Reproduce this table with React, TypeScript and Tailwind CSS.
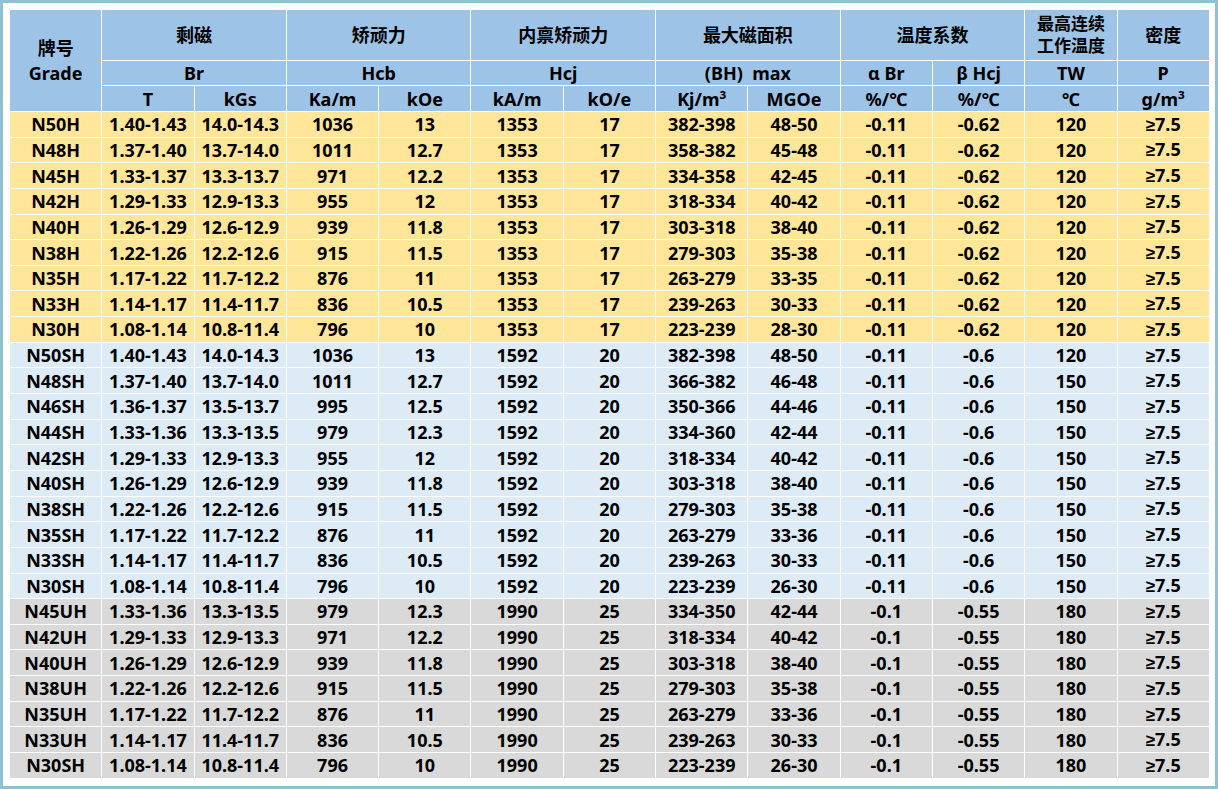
import React from 'react';

type Row = string[];

const hRows: Row[] = [
  ['N50H', '1.40-1.43', '14.0-14.3', '1036', '13', '382-398', '48-50'],
  ['N48H', '1.37-1.40', '13.7-14.0', '1011', '12.7', '358-382', '45-48'],
  ['N45H', '1.33-1.37', '13.3-13.7', '971', '12.2', '334-358', '42-45'],
  ['N42H', '1.29-1.33', '12.9-13.3', '955', '12', '318-334', '40-42'],
  ['N40H', '1.26-1.29', '12.6-12.9', '939', '11.8', '303-318', '38-40'],
  ['N38H', '1.22-1.26', '12.2-12.6', '915', '11.5', '279-303', '35-38'],
  ['N35H', '1.17-1.22', '11.7-12.2', '876', '11', '263-279', '33-35'],
  ['N33H', '1.14-1.17', '11.4-11.7', '836', '10.5', '239-263', '30-33'],
  ['N30H', '1.08-1.14', '10.8-11.4', '796', '10', '223-239', '28-30'],
];

const shRows: Row[] = [
  ['N50SH', '1.40-1.43', '14.0-14.3', '1036', '13', '382-398', '48-50', '120'],
  ['N48SH', '1.37-1.40', '13.7-14.0', '1011', '12.7', '366-382', '46-48', '150'],
  ['N46SH', '1.36-1.37', '13.5-13.7', '995', '12.5', '350-366', '44-46', '150'],
  ['N44SH', '1.33-1.36', '13.3-13.5', '979', '12.3', '334-360', '42-44', '150'],
  ['N42SH', '1.29-1.33', '12.9-13.3', '955', '12', '318-334', '40-42', '150'],
  ['N40SH', '1.26-1.29', '12.6-12.9', '939', '11.8', '303-318', '38-40', '150'],
  ['N38SH', '1.22-1.26', '12.2-12.6', '915', '11.5', '279-303', '35-38', '150'],
  ['N35SH', '1.17-1.22', '11.7-12.2', '876', '11', '263-279', '33-36', '150'],
  ['N33SH', '1.14-1.17', '11.4-11.7', '836', '10.5', '239-263', '30-33', '150'],
  ['N30SH', '1.08-1.14', '10.8-11.4', '796', '10', '223-239', '26-30', '150'],
];

const uhRows: Row[] = [
  ['N45UH', '1.33-1.36', '13.3-13.5', '979', '12.3', '334-350', '42-44'],
  ['N42UH', '1.29-1.33', '12.9-13.3', '971', '12.2', '318-334', '40-42'],
  ['N40UH', '1.26-1.29', '12.6-12.9', '939', '11.8', '303-318', '38-40'],
  ['N38UH', '1.22-1.26', '12.2-12.6', '915', '11.5', '279-303', '35-38'],
  ['N35UH', '1.17-1.22', '11.7-12.2', '876', '11', '263-279', '33-36'],
  ['N33UH', '1.14-1.17', '11.4-11.7', '836', '10.5', '239-263', '30-33'],
  ['N30SH', '1.08-1.14', '10.8-11.4', '796', '10', '223-239', '26-30'],
];

const th = 'border border-white bg-[#9dc3e6] text-center align-middle p-0';
const td = 'border border-white text-center align-middle p-0';

// the ≥ sign falls back to a CJK glyph in Noto Sans, so give it its own font
const Density = () => (
  <>
    <span className="font-['Liberation_Sans'] text-[17px]">≥</span>7.5
  </>
);

const DataRow = ({ cells, bg }: { cells: string[]; bg: string }) => (
  <tr className="h-[25.65px]">
    {cells.map((c, i) => (
      <td key={i} className={`${td} ${bg}`}>
        {c === '≥7.5' ? <Density /> : c}
      </td>
    ))}
  </tr>
);

export default function App() {
  return (
    <div className="w-[1218px] h-[789px] border-[3px] border-[#8ec2cf] bg-white p-[6px]">
      <table
        className="w-[1200px] table-fixed border-collapse text-[18px] font-bold leading-none text-black"
        style={{ fontFamily: '"Noto Sans", "Noto Sans CJK SC", sans-serif' }}
      >
        <colgroup>
          {Array.from({ length: 13 }).map((_, i) => (
            <col key={i} className="w-[92.3px]" />
          ))}
        </colgroup>
        <thead>
          <tr className="h-[51px]">
            <th rowSpan={3} className={th}>
              <div className="leading-[25px]">牌号</div>
              <div className="leading-[25px]">Grade</div>
            </th>
            <th colSpan={2} className={th}>剩磁</th>
            <th colSpan={2} className={th}>矫顽力</th>
            <th colSpan={2} className={th}>内禀矫顽力</th>
            <th colSpan={2} className={th}>最大磁面积</th>
            <th colSpan={2} className={th}>温度系数</th>
            <th className={th}>
              <div className="text-[17px] leading-[22px]">最高连续</div>
              <div className="text-[17px] leading-[22px]">工作温度</div>
            </th>
            <th className={th}>密度</th>
          </tr>
          <tr className="h-[25px]">
            <th colSpan={2} className={th}>Br</th>
            <th colSpan={2} className={th}>Hcb</th>
            <th colSpan={2} className={th}>Hcj</th>
            <th colSpan={2} className={th}>(BH)&nbsp;&nbsp;max</th>
            <th className={th}>α Br</th>
            <th className={th}>β Hcj</th>
            <th className={th}>TW</th>
            <th className={th}>P</th>
          </tr>
          <tr className="h-[26px]">
            <th className={th}>T</th>
            <th className={th}>kGs</th>
            <th className={th}>Ka/m</th>
            <th className={th}>kOe</th>
            <th className={th}>kA/m</th>
            <th className={th}>kO/e</th>
            <th className={th}>Kj/m³</th>
            <th className={th}>MGOe</th>
            <th className={th}>%/℃</th>
            <th className={th}>%/℃</th>
            <th className={th}>℃</th>
            <th className={th}>g/m³</th>
          </tr>
        </thead>
        <tbody>
          {hRows.map((r, i) => (
            <DataRow
              key={'h' + i}
              bg="bg-[#ffe699]"
              cells={[r[0], r[1], r[2], r[3], r[4], '1353', '17', r[5], r[6], '-0.11', '-0.62', '120', '≥7.5']}
            />
          ))}
          {shRows.map((r, i) => (
            <DataRow
              key={'sh' + i}
              bg="bg-[#ddebf7]"
              cells={[r[0], r[1], r[2], r[3], r[4], '1592', '20', r[5], r[6], '-0.11', '-0.6', r[7], '≥7.5']}
            />
          ))}
          {uhRows.map((r, i) => (
            <DataRow
              key={'uh' + i}
              bg="bg-[#d9d9d9]"
              cells={[r[0], r[1], r[2], r[3], r[4], '1990', '25', r[5], r[6], '-0.1', '-0.55', '180', '≥7.5']}
            />
          ))}
        </tbody>
      </table>
    </div>
  );
}
